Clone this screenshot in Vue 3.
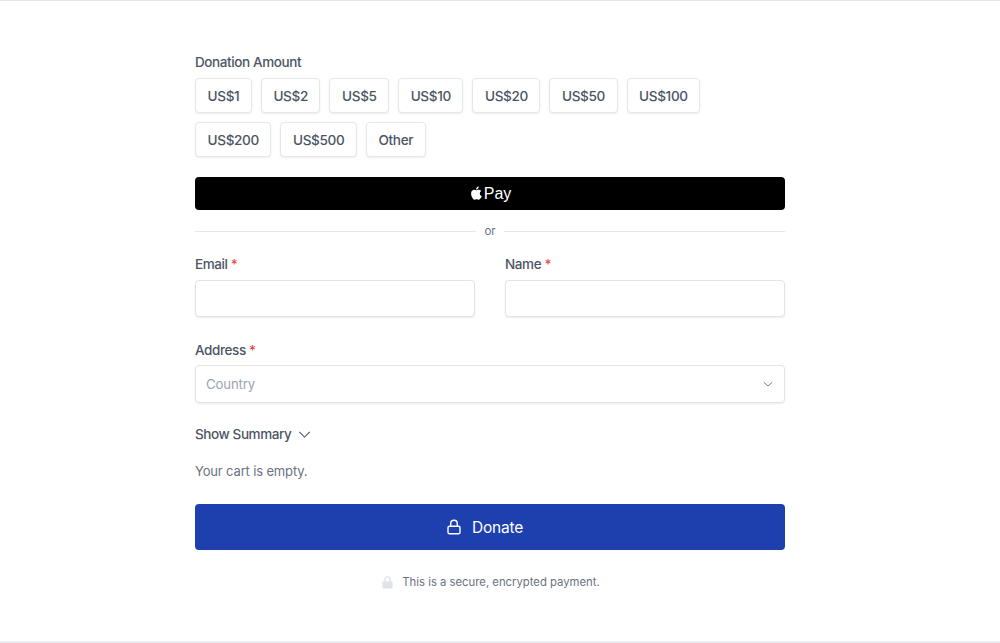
<script setup>
const amounts = ['US$1', 'US$2', 'US$5', 'US$10', 'US$20', 'US$50', 'US$100', 'US$200', 'US$500', 'Other'];
</script>

<template>
  <main class="page">
    <form class="form" @submit.prevent>
      <div class="label amount-label">Donation Amount</div>
      <div class="amounts">
        <button v-for="a in amounts" :key="a" type="button" class="amount">{{ a }}</button>
      </div>

      <button type="button" class="apple-pay" aria-label="Apple Pay">
        <svg class="apple" viewBox="0 0 14 17" width="13" height="16">
          <path fill="#fff" d="M11.6 9c0-1.7 1.4-2.5 1.5-2.6-.8-1.2-2.1-1.4-2.5-1.4-1.1-.1-2.1.6-2.6.6-.6 0-1.4-.6-2.3-.6-1.2 0-2.3.7-2.9 1.7-1.2 2.2-.3 5.4.9 7.2.6.9 1.3 1.8 2.2 1.8.9 0 1.2-.6 2.3-.6 1.1 0 1.4.6 2.3.6 1 0 1.6-.9 2.2-1.7.7-1 1-2 1-2.1-.1 0-2.1-.8-2.1-2.9zM9.8 3.7c.5-.6.8-1.4.7-2.2-.7 0-1.6.5-2.1 1.1-.5.5-.9 1.4-.8 2.1.8.1 1.7-.4 2.2-1z"/>
        </svg>
        <span>Pay</span>
      </button>

      <div class="divider"><span>or</span></div>

      <div class="two-cols">
        <label class="field">
          <span class="label">Email <em>*</em></span>
          <input type="text" class="input" />
        </label>
        <label class="field">
          <span class="label">Name <em>*</em></span>
          <input type="text" class="input" />
        </label>
      </div>

      <div class="field address">
        <span class="label">Address <em>*</em></span>
        <div class="input select">
          <span>Country</span>
          <svg viewBox="0 0 20 20" width="12" height="12" fill="none" stroke="#6b7280" stroke-width="1.6">
            <path d="M3 7l7 6.5L17 7" />
          </svg>
        </div>
      </div>

      <div class="summary">
        <span>Show Summary</span>
        <svg viewBox="0 0 20 20" width="15" height="15" fill="none" stroke="#4b5563" stroke-width="1.4">
          <path d="M3 6.5l7 7 7-7" />
        </svg>
      </div>

      <p class="empty">Your cart is empty.</p>

      <button type="submit" class="donate">
        <svg viewBox="0 0 16 16" width="16" height="16" fill="none" stroke="#fff" stroke-width="1.4">
          <rect x="2" y="7.2" width="12" height="7.6" rx="1.6" />
          <path d="M4.7 7V4.6a3.3 3.3 0 0 1 6.6 0V7" />
        </svg>
        <span>Donate</span>
      </button>

      <div class="secure">
        <svg viewBox="0 0 12 14" width="11" height="13">
          <path fill="#dfe2e8" d="M1.5 6h9a1 1 0 0 1 1 1v5.5a1 1 0 0 1-1 1h-9a1 1 0 0 1-1-1V7a1 1 0 0 1 1-1z" />
          <path fill="none" stroke="#dfe2e8" stroke-width="1.4" d="M3.2 6.5V3.7a2.8 2.8 0 0 1 5.6 0v2.8" />
        </svg>
        <span>This is a secure, encrypted payment.</span>
      </div>
    </form>
  </main>
</template>

<style scoped>
.page {
  box-sizing: border-box;
  height: 643px;
  border-top: 1px solid #e5e7eb;
  border-bottom: 2px solid #eceef1;
  background: #fff;
  font-family: Inter, "Liberation Sans", sans-serif;
  color: #4b5563;
  overflow: hidden;
}
.form {
  width: 590px;
  margin-left: 195px;
  padding-top: 52px;
}
.label {
  display: block;
  font-size: 13.5px;
  line-height: 18px;
  font-weight: 500;
  letter-spacing: -0.4px;
  color: #4b5563;
}
.label em {
  font-style: normal;
  color: #ef4444;
}
.amounts {
  display: flex;
  flex-wrap: wrap;
  gap: 9px;
  margin-top: 7px;
  width: 540px;
}
.amount {
  height: 35px;
  padding: 0 11.5px;
  background: #fff;
  border: 1px solid #e5e7eb;
  border-radius: 4px;
  box-shadow: 0 1px 2px rgba(0, 0, 0, 0.08);
  font-family: inherit;
  font-size: 13.6px;
  font-weight: 500;
  letter-spacing: -0.35px;
  color: #4b5563;
}
.apple-pay {
  display: flex;
  align-items: center;
  justify-content: center;
  gap: 2px;
  width: 100%;
  height: 33px;
  margin-top: 20px;
  background: #000;
  border: 0;
  border-radius: 4px;
  color: #fff;
  font-family: "Liberation Sans", sans-serif;
  font-size: 16px;
}
.apple {
  margin-top: -2px;
}
.divider {
  display: flex;
  align-items: center;
  gap: 8px;
  margin-top: 13px;
  font-size: 11.5px;
  line-height: 16px;
  color: #6b7280;
}
.divider::before,
.divider::after {
  content: "";
  flex: 1;
  height: 1px;
  background: #e5e7eb;
}
.two-cols {
  display: grid;
  grid-template-columns: 1fr 1fr;
  gap: 30px;
  margin-top: 16px;
}
.field {
  display: block;
}
.input {
  display: block;
  box-sizing: border-box;
  width: 100%;
  height: 37px;
  margin-top: 7px;
  background: #fff;
  border: 1px solid #e2e4e8;
  border-radius: 4px;
  box-shadow: 0 1px 2px rgba(0, 0, 0, 0.08);
}
.address {
  margin-top: 24px;
}
.select {
  display: flex;
  align-items: center;
  justify-content: space-between;
  height: 38px;
  margin-top: 6px;
  padding: 0 10px;
  font-size: 13.2px;
  letter-spacing: -0.15px;
  color: #9ca3af;
}
.summary {
  display: flex;
  align-items: center;
  gap: 6px;
  margin-top: 22px;
  font-size: 13.5px;
  line-height: 18px;
  font-weight: 500;
  letter-spacing: -0.4px;
}
.empty {
  margin: 19px 0 0;
  font-size: 13px;
  line-height: 18px;
  letter-spacing: -0.15px;
  color: #6b7280;
}
.donate {
  display: flex;
  align-items: center;
  justify-content: center;
  gap: 10px;
  width: 100%;
  height: 46px;
  margin-top: 24px;
  padding: 0 11px 0 0;
  background: #1e40af;
  border: 0;
  border-radius: 4px;
  color: #fff;
  font-family: inherit;
  font-size: 15.5px;
  font-weight: 400;
  letter-spacing: -0.2px;
}
.secure {
  display: flex;
  align-items: center;
  justify-content: center;
  gap: 9px;
  margin-top: 24px;
  padding-left: 2px;
  font-size: 11.3px;
  line-height: 16px;
  color: #6b7280;
}
</style>
